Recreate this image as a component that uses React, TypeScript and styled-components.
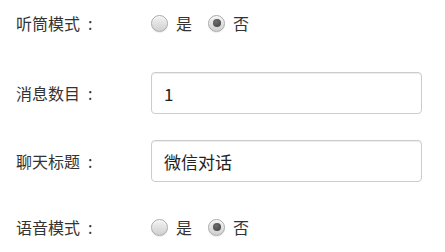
import React, { useState } from "react";
import styled, { createGlobalStyle } from "styled-components";

const GlobalStyle = createGlobalStyle`
    html, body {
        margin: 0;
        padding: 0;
        background: #ffffff;
    }
    body {
        font-family: "Noto Sans CJK SC", "Liberation Sans", sans-serif;
        color: #333333;
    }
`;

const Form = styled.form`
    width: 445px;
    padding: 2px 0 0 16px;
    box-sizing: border-box;
    display: flex;
    flex-direction: column;
`;

const Row = styled.div<{ $gap: number }>`
    display: flex;
    align-items: center;
    height: 42px;
    margin-bottom: ${(p) => p.$gap}px;
`;

const Label = styled.label`
    width: 135px;
    flex-shrink: 0;
    font-size: 16px;
    color: #333333;
    white-space: nowrap;
`;

const Colon = styled.span`
    margin-left: 8px;
`;

const TextInput = styled.input`
    width: 271px;
    height: 42px;
    box-sizing: border-box;
    padding: 0 12px;
    border: 1px solid #cccccc;
    border-radius: 4px;
    box-shadow: inset 0 1px 1px rgba(0, 0, 0, 0.075);
    font-family: "Noto Sans CJK SC", "Liberation Sans", sans-serif;
    font-size: 17px;
    color: #222222;
    outline: none;
`;

const RadioGroup = styled.div`
    display: flex;
    align-items: center;
    gap: 16px;
`;

const RadioOption = styled.label`
    display: flex;
    align-items: center;
    gap: 8px;
    font-size: 16px;
    color: #333333;
    cursor: pointer;
`;

const Radio = styled.input`
    appearance: none;
    -webkit-appearance: none;
    margin: 0;
    width: 17px;
    height: 17px;
    border-radius: 50%;
    border: 1px solid #a9a9a9;
    box-sizing: border-box;
    background: linear-gradient(#f2f2f2, #d0d0d0);
    box-shadow: inset 0 1px 1px rgba(255, 255, 255, 0.8), 0 1px 1px rgba(0, 0, 0, 0.08);
    position: relative;
    cursor: pointer;

    &:checked::after {
        content: "";
        position: absolute;
        left: 50%;
        top: 50%;
        width: 8px;
        height: 8px;
        margin: -4px 0 0 -4px;
        border-radius: 50%;
        background: radial-gradient(circle at 40% 35%, #6e6e6e, #3f3f3f);
    }
`;

interface YesNoProps {
    name: string;
    value: boolean;
    onChange: (v: boolean) => void;
}

const YesNo = ({ name, value, onChange }: YesNoProps) => (
    <RadioGroup>
        <RadioOption>
            <Radio type="radio" name={name} checked={value} onChange={() => onChange(true)} />
            是
        </RadioOption>
        <RadioOption>
            <Radio type="radio" name={name} checked={!value} onChange={() => onChange(false)} />
            否
        </RadioOption>
    </RadioGroup>
);

const App = () => {
    const [earpiece, setEarpiece] = useState(false);
    const [count, setCount] = useState("1");
    const [title, setTitle] = useState("微信对话");
    const [voice, setVoice] = useState(false);

    return (
        <>
            <GlobalStyle />
            <Form onSubmit={(e) => e.preventDefault()}>
                <Row $gap={28}>
                    <Label>听筒模式<Colon>:</Colon></Label>
                    <YesNo name="earpiece" value={earpiece} onChange={setEarpiece} />
                </Row>
                <Row $gap={26}>
                    <Label>消息数目<Colon>:</Colon></Label>
                    <TextInput value={count} onChange={(e) => setCount(e.target.value)} />
                </Row>
                <Row $gap={24}>
                    <Label>聊天标题<Colon>:</Colon></Label>
                    <TextInput value={title} onChange={(e) => setTitle(e.target.value)} />
                </Row>
                <Row $gap={0}>
                    <Label>语音模式<Colon>:</Colon></Label>
                    <YesNo name="voice" value={voice} onChange={setVoice} />
                </Row>
            </Form>
        </>
    );
};

export default App;
